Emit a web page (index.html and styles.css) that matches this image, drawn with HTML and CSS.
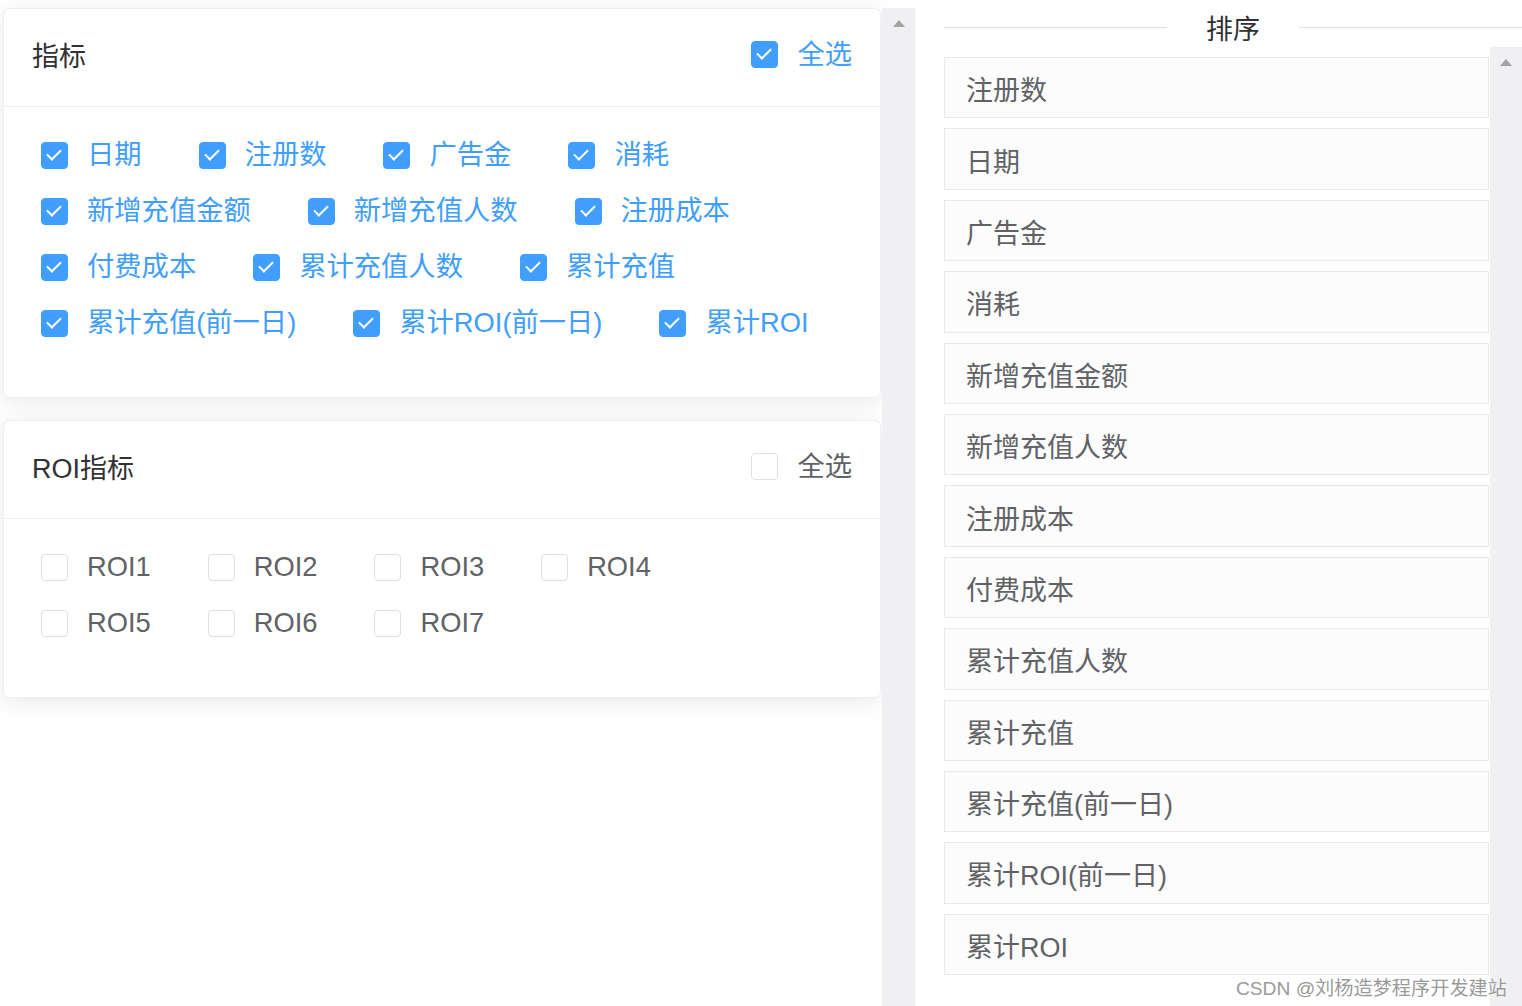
FILE: index.html
```html
<!DOCTYPE html>
<html lang="zh-CN">
<head>
<meta charset="utf-8">
<title>指标排序</title>
<link rel="stylesheet" href="styles.css">
</head>
<body>
<div class="page">
  <div class="left">
    <div class="left-scroll">
      <div class="left-content">
        <div class="card">
          <div class="card-header">
            <span class="card-title">指标</span>
            <label class="cb checked"><span class="box"></span><span class="lbl">全选</span></label>
          </div>
          <div class="card-body">
            <label class="cb checked"><span class="box"></span><span class="lbl">日期</span></label>
            <label class="cb checked"><span class="box"></span><span class="lbl">注册数</span></label>
            <label class="cb checked"><span class="box"></span><span class="lbl">广告金</span></label>
            <label class="cb checked"><span class="box"></span><span class="lbl">消耗</span></label>
            <label class="cb checked"><span class="box"></span><span class="lbl">新增充值金额</span></label>
            <label class="cb checked"><span class="box"></span><span class="lbl">新增充值人数</span></label>
            <label class="cb checked"><span class="box"></span><span class="lbl">注册成本</span></label>
            <label class="cb checked"><span class="box"></span><span class="lbl">付费成本</span></label>
            <label class="cb checked"><span class="box"></span><span class="lbl">累计充值人数</span></label>
            <label class="cb checked"><span class="box"></span><span class="lbl">累计充值</span></label>
            <label class="cb checked"><span class="box"></span><span class="lbl">累计充值(前一日)</span></label>
            <label class="cb checked"><span class="box"></span><span class="lbl">累计ROI(前一日)</span></label>
            <label class="cb checked"><span class="box"></span><span class="lbl">累计ROI</span></label>
          </div>
        </div>
        <div class="card card-second">
          <div class="card-header">
            <span class="card-title">ROI指标</span>
            <label class="cb"><span class="box"></span><span class="lbl">全选</span></label>
          </div>
          <div class="card-body">
            <label class="cb"><span class="box"></span><span class="lbl">ROI1</span></label>
            <label class="cb"><span class="box"></span><span class="lbl">ROI2</span></label>
            <label class="cb"><span class="box"></span><span class="lbl">ROI3</span></label>
            <label class="cb"><span class="box"></span><span class="lbl">ROI4</span></label>
            <label class="cb"><span class="box"></span><span class="lbl">ROI5</span></label>
            <label class="cb"><span class="box"></span><span class="lbl">ROI6</span></label>
            <label class="cb"><span class="box"></span><span class="lbl">ROI7</span></label>
          </div>
        </div>
      </div>
      <div class="scrollbar"><span class="arrow-up"></span></div>
    </div>
  </div>
  <div class="right">
    <div class="divider"><span class="line"></span><span class="divider-text">排序</span><span class="line"></span></div>
    <div class="sort-scroll">
      <div class="sort-list">
        <div class="sort-item">注册数</div>
        <div class="sort-item">日期</div>
        <div class="sort-item">广告金</div>
        <div class="sort-item">消耗</div>
        <div class="sort-item">新增充值金额</div>
        <div class="sort-item">新增充值人数</div>
        <div class="sort-item">注册成本</div>
        <div class="sort-item">付费成本</div>
        <div class="sort-item">累计充值人数</div>
        <div class="sort-item">累计充值</div>
        <div class="sort-item">累计充值(前一日)</div>
        <div class="sort-item">累计ROI(前一日)</div>
        <div class="sort-item">累计ROI</div>
      </div>
      <div class="scrollbar scrollbar-inner"><span class="arrow-up"></span></div>
    </div>
  </div>
  <div class="watermark">CSDN @刘杨造梦程序开发建站</div>
</div>
</body>
</html>
```
FILE: styles.css
```css
* { box-sizing: border-box; }
html, body {
  margin: 0;
  padding: 0;
  background: #ffffff;
  overflow: hidden;
}
body {
  font-family: "Liberation Sans", "Noto Sans CJK SC", sans-serif;
  color: #606266;
}
.page {
  position: relative;
  display: flex;
  width: 1522px;
  height: 1006px;
}
.left {
  width: 915px;
  padding-top: 8px;
  height: 1006px;
}
.left-scroll {
  display: flex;
  height: 998px;
}
.left-content {
  width: 882px;
  padding: 0 1px 0 3px;
}
.scrollbar {
  position: relative;
  width: 33px;
  background: #f0f0f2;
}
.arrow-up {
  position: absolute;
  left: 50%;
  top: 12px;
  margin-left: -6px;
  width: 0;
  height: 0;
  border-left: 6px solid transparent;
  border-right: 6px solid transparent;
  border-bottom: 7px solid #a3a3a3;
}
.card {
  background: #fff;
  border: 1px solid #ebeef5;
  border-radius: 7px;
  box-shadow: 0 4px 23px 0 rgba(0, 0, 0, 0.09);
  overflow: hidden;
}
.card-second {
  margin-top: 22px;
}
.card-header {
  display: flex;
  align-items: center;
  justify-content: space-between;
  height: 98px;
  padding: 0 28px 6px 28px;
  border-bottom: 1px solid #ebeef5;
}
.card-title {
  font-size: 27px;
  color: #303133;
}
.card-body {
  display: flex;
  flex-wrap: wrap;
  row-gap: 20px;
  padding: 30px 10px 56px 37px;
}
.card-header .cb {
  margin-right: 0;
}
.cb {
  display: flex;
  align-items: center;
  height: 36px;
  margin-right: 57px;
  font-size: 27.3px;
  color: #606266;
  white-space: nowrap;
}
.box {
  position: relative;
  display: inline-block;
  width: 27px;
  height: 27px;
  border: 1.5px solid #dcdfe6;
  border-radius: 4px;
  background: #fff;
  flex: none;
}
.lbl {
  padding-left: 19px;
  line-height: 36px;
}
.cb.checked {
  color: #409eff;
}
.cb.checked .box {
  background: #409eff;
  border-color: #409eff;
}
.cb.checked .box::after {
  content: "";
  position: absolute;
  left: 8px;
  top: 3px;
  width: 6px;
  height: 12px;
  border-right: 2px solid #fff;
  border-bottom: 2px solid #fff;
  transform: rotate(45deg);
}
.right {
  flex: 1;
  margin-left: 29px;
  display: flex;
  flex-direction: column;
}
.divider {
  display: flex;
  align-items: center;
  height: 55px;
  margin-bottom: -8px;
}
.line {
  flex: 1;
  height: 1px;
  background: #dcdfe6;
}
.divider-text {
  padding: 0 39px;
  font-size: 27px;
  color: #303133;
  font-family: "Noto Sans CJK SC", sans-serif;
}
.sort-scroll {
  display: flex;
  flex: 1;
}
.sort-list {
  flex: 1;
  padding-top: 10px;
}
.scrollbar-inner {
  width: 32px;
}
.sort-item {
  display: flex;
  align-items: center;
  height: 61.4px;
  margin-right: 1px;
  margin-bottom: 10px;
  padding-left: 21px;
  padding-top: 2px;
  background: #fcfcfc;
  border: 1px solid #e9e9e9;
  font-size: 27px;
  color: #606266;
}
.watermark {
  position: absolute;
  right: 15px;
  top: 973px;
  font-size: 19.2px;
  color: #9a9a9a;
  text-shadow: 0 0 2px #fff;
  white-space: nowrap;
}
```
